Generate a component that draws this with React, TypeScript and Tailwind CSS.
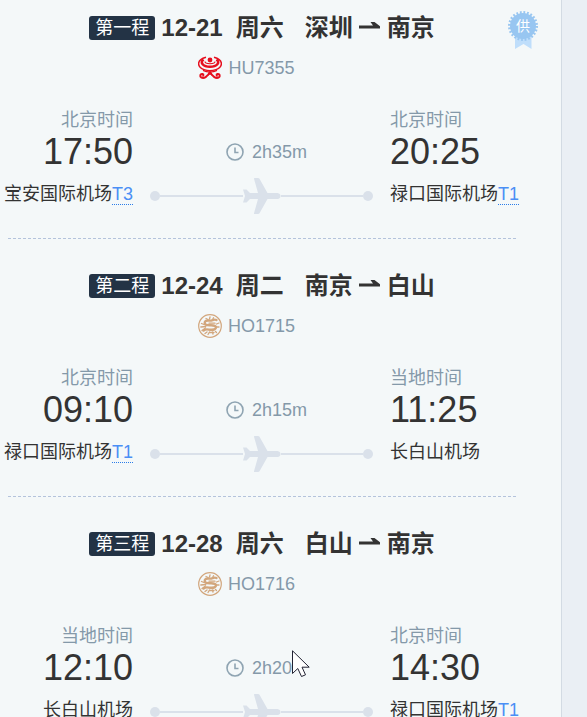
import React from "react";

type Stop = { zone: string; time: string; airport: string; terminal?: string };
type Leg = {
  label: string;
  date: string;
  weekday: string;
  from: string;
  to: string;
  carrier: "hainan" | "juneyao";
  flight: string;
  duration: string;
  depart: Stop;
  arrive: Stop;
};

const legs: Leg[] = [
  {
    label: "第一程", date: "12-21", weekday: "周六", from: "深圳", to: "南京",
    carrier: "hainan", flight: "HU7355", duration: "2h35m",
    depart: { zone: "北京时间", time: "17:50", airport: "宝安国际机场", terminal: "T3" },
    arrive: { zone: "北京时间", time: "20:25", airport: "禄口国际机场", terminal: "T1" },
  },
  {
    label: "第二程", date: "12-24", weekday: "周二", from: "南京", to: "白山",
    carrier: "juneyao", flight: "HO1715", duration: "2h15m",
    depart: { zone: "北京时间", time: "09:10", airport: "禄口国际机场", terminal: "T1" },
    arrive: { zone: "当地时间", time: "11:25", airport: "长白山机场" },
  },
  {
    label: "第三程", date: "12-28", weekday: "周六", from: "白山", to: "南京",
    carrier: "juneyao", flight: "HO1716", duration: "2h20",
    depart: { zone: "当地时间", time: "12:10", airport: "长白山机场" },
    arrive: { zone: "北京时间", time: "14:30", airport: "禄口国际机场", terminal: "T1" },
  },
];

function HainanLogo() {
  return (
    <svg className="size-6" viewBox="0 0 24 24" fill="none" stroke="#e60f1e" aria-hidden="true">
      <circle cx="12" cy="4" r="2.4" fill="#e60f1e" stroke="none" />
      <path d="M8 1.300C-2 4-1 11 6 13.600c3.500 1.300 8.500 1.300 12 0C25 11 26 4 16 1.300" strokeWidth="1.500" />
      <path d="M5.500 3.500C1.500 6.500 5 10.800 12 10.800s10.500-4.300 6.500-7.300" strokeWidth="2.600" />
      <path d="M7 5.500C7 8.500 17 8.500 17 5.500" strokeWidth="1.100" />
      <path d="M5 14.300c4 2 10 2 14 0" strokeWidth="1.300" />
      <path d="M12 15.500c-2 5-6 7.300-8.500 6.100-2.200-1.200-1.200-4.100 1-3.600 1.500.4 1 2-.2 2M12 15.500c2 5 6 7.300 8.500 6.100 2.200-1.200 1.200-4.100-1-3.600-1.500.4-1 2 .2 2" strokeWidth="2" />
      <path d="M12 16l-2.500 4L12 18.500l2.500 1.500Z" fill="#e60f1e" stroke="none" />
    </svg>
  );
}

function JuneyaoLogo() {
  return (
    <svg className="size-6" viewBox="0 0 24 24" fill="none" stroke="#d2a67c" strokeLinecap="round" aria-hidden="true">
      <circle cx="12" cy="12" r="11.300" strokeWidth="1.200" />
      <path d="M18.500 6c-3-1.500-4 1-7 .6-3-.5-5 .5-4.800 2.600.2 2.500 4 2.100 6.300 2.100 3 0 5.500.7 4.800 2.700-.8 2-4 2-7 1.600-2-.4-4-.2-5.300 1" strokeWidth="2.400" />
      <path d="M8 4.500l2 1M12 3l-.5 2M15.500 3.800l-1 2M3.500 9.500l2.500 1M2.800 13l5-.5M4 16.500l3.500-2.500M18.500 10l2.500-1M18 13h3M10 20.500l1.500-2.500M15 20l-.5-2M7 19.500l2-1.500M11 9.200h6M17.500 17.500l1 1M12 18.500h4" strokeWidth="1.300" />
    </svg>
  );
}

function Arrow() {
  return (
    <svg className="h-3 w-[22px]" viewBox="0 0 22 12" fill="#333" role="img" aria-label="至">
      <path d="M0 3.500H14L11.500 0H15.500L21 4.300V6.500H0Z" />
    </svg>
  );
}

function Clock() {
  return (
    <svg className="size-[18px]" viewBox="0 0 18 18" fill="none" stroke="#8fa4b2" strokeWidth="1.600" aria-hidden="true">
      <circle cx="9" cy="9" r="8" />
      <path d="M9 4.500V9.500H12.500" />
    </svg>
  );
}

function Plane() {
  return (
    <svg className="h-9 w-[38px]" viewBox="0 0 38 36" fill="#dae1ea" aria-hidden="true">
      <path d="M0 11.500H3.500L7 15H15L11 .8Q10.800 0 11.600 0H15Q16 0 16.500 .8L24.500 15H34.500Q37.500 15.500 37.500 18T34.500 21H24.500L16.500 35.200Q16 36 15 36H11.600Q10.800 36 11 35.200L15 21H7L3.500 24.500H0L2 18Z" />
    </svg>
  );
}

function SupplierBadge() {
  return (
    <div className="absolute top-[11px] right-[23px] h-[38px] w-[30px]">
      <svg className="absolute inset-0" width="30" height="38" viewBox="0 0 30 38" aria-hidden="true">
        <path d="M7 22H23.500V38L15.500 33L7 38Z" fill="#bfdefb" />
        <circle cx="15" cy="15" r="13" fill="#98c6f1" />
        <circle cx="15" cy="15" r="13.500" fill="none" stroke="#98c6f1" strokeWidth="3" strokeDasharray="1.770 1.765" />
      </svg>
      <span className="relative block text-center text-sm leading-[30px] text-white">供</span>
    </div>
  );
}

function StopInfo({ stop, align }: { stop: Stop; align: string }) {
  return (
    <div className={`whitespace-nowrap ${align}`}>
      <div className="h-6 text-lg leading-6 text-[#8499a9]">{stop.zone}</div>
      <div className="h-10 text-4xl leading-10">{stop.time}</div>
      <div className="mt-[10px] h-6 text-lg leading-6">
        {stop.airport}
        {stop.terminal && (
          <a href="#terminal" className="border-b border-dotted border-[#2b7de9] text-[#4a8ff5]">
            {stop.terminal}
          </a>
        )}
      </div>
    </div>
  );
}

function FlightLeg({ leg }: { leg: Leg }) {
  return (
    <section>
      <h2 className="flex h-[30px] items-center justify-center text-2xl leading-[30px] font-bold whitespace-nowrap">
        <span className="mr-[6px] h-6 rounded-[3px] bg-[#233345] px-[6px] text-lg leading-6 font-normal text-white">
          {leg.label}
        </span>
        <span className="mr-[13px]">{leg.date}</span>
        <span className="mr-[21px]">{leg.weekday}</span>
        <span className="mr-[6px]">{leg.from}</span>
        <Arrow />
        <span className="ml-[6px]">{leg.to}</span>
      </h2>
      <div className="mt-[13px] mr-[31px] flex h-6 items-center justify-center gap-[6px] text-lg leading-6 text-[#8499a9]">
        {leg.carrier === "hainan" ? <HainanLogo /> : <JuneyaoLogo />}
        <span>{leg.flight}</span>
      </div>
      <div className="mt-7 grid grid-cols-[130px_1fr_131px] pb-6">
        <StopInfo stop={leg.depart} align="text-right" />
        <div className="mr-[17px] ml-[17px] pt-8">
          <div className="ml-[76px] flex h-6 items-center gap-2 text-lg leading-6 text-[#8499a9]">
            <Clock />
            <span>{leg.duration}</span>
          </div>
          <div className="mt-[14px] flex h-9 items-center">
            <span className="size-[10px] rounded-full bg-[#dae1ea]" />
            <span className="h-[2px] flex-1 bg-[#dae1ea]" />
            <Plane />
            <span className="h-[2px] flex-1 bg-[#dae1ea]" />
            <span className="size-[10px] rounded-full bg-[#dae1ea]" />
          </div>
        </div>
        <StopInfo stop={leg.arrive} align="text-left" />
      </div>
    </section>
  );
}

export default function App() {
  return (
    <div className="h-screen overflow-hidden bg-[#eaeff4] pr-[25px] font-['Liberation_Sans','Noto_Sans_CJK_SC',sans-serif] text-[#333]">
      <main className="relative min-h-full border-r border-[#d3dbe3] bg-[#f4f8f9] pt-[13px] pr-10 pl-[3px]">
        <SupplierBadge />
        {legs.map((leg, i) => (
          <React.Fragment key={leg.label}>
            {i > 0 && <hr className="mx-[5px] mb-8 border-t border-dashed border-[#b4c3dc]" />}
            <FlightLeg leg={leg} />
          </React.Fragment>
        ))}
        <svg className="absolute top-[650px] left-[292px]" width="19" height="28" viewBox="0 0 19 28" aria-hidden="true">
          <path d="M.5 .8V23.500L5.800 18.500L9.500 26.500L13.500 24.800L10 17.200H17.200Z" fill="#fff" stroke="#222233" />
        </svg>
      </main>
    </div>
  );
}
